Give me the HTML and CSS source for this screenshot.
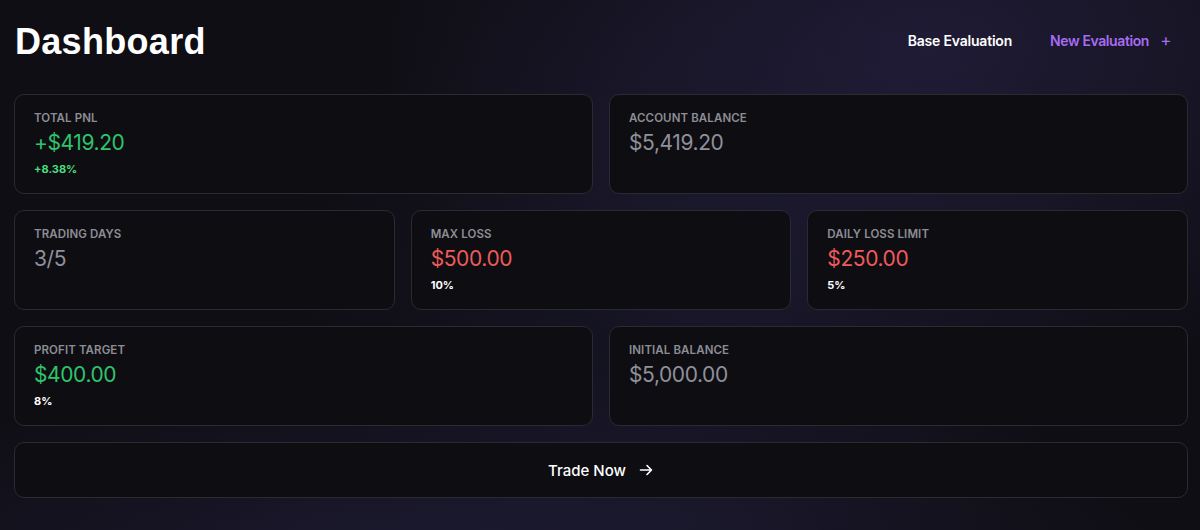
FILE: index.html
```html
<!DOCTYPE html>
<html>
<head>
<meta charset="utf-8">
<link rel="stylesheet" href="styles.css">
</head>
<body>
<div class="page">
  <header class="header">
    <h1 class="title">Dashboard</h1>
    <nav class="actions">
      <span class="base">Base Evaluation</span>
      <span class="new">New Evaluation <span class="plus">+</span></span>
    </nav>
  </header>
  <div class="row two">
    <div class="card">
      <div class="label">TOTAL PNL</div>
      <div class="value green">+$419.20</div>
      <div class="sub green-l">+8.38%</div>
    </div>
    <div class="card">
      <div class="label">ACCOUNT BALANCE</div>
      <div class="value gray">$5,419.20</div>
    </div>
  </div>
  <div class="row three">
    <div class="card">
      <div class="label">TRADING DAYS</div>
      <div class="value gray">3/5</div>
    </div>
    <div class="card">
      <div class="label">MAX LOSS</div>
      <div class="value red">$500.00</div>
      <div class="sub">10%</div>
    </div>
    <div class="card">
      <div class="label">DAILY LOSS LIMIT</div>
      <div class="value red">$250.00</div>
      <div class="sub">5%</div>
    </div>
  </div>
  <div class="row two">
    <div class="card">
      <div class="label">PROFIT TARGET</div>
      <div class="value green">$400.00</div>
      <div class="sub">8%</div>
    </div>
    <div class="card">
      <div class="label">INITIAL BALANCE</div>
      <div class="value gray">$5,000.00</div>
    </div>
  </div>
  <button class="trade">Trade Now
    <svg class="arrow" width="16" height="16" viewBox="0 0 16 16" fill="none" stroke="currentColor" stroke-width="1.6" stroke-linecap="round" stroke-linejoin="round"><path d="M2.5 8h11M9 3.5L13.5 8 9 12.5"/></svg>
  </button>
</div>
</body>
</html>
```
FILE: styles.css
```css
* { box-sizing: border-box; }
html, body { margin: 0; height: 100%; }
body {
  background-color: #0f0e14;
  background-image:
    radial-gradient(ellipse 560px 340px at 930px 50px, rgba(42, 36, 76, 0.6), rgba(42,36,76,0) 100%),
    radial-gradient(ellipse 700px 200px at 480px 560px, rgba(40, 36, 74, 0.55), rgba(40,36,74,0) 100%),
    radial-gradient(ellipse 420px 320px at 700px 290px, rgba(30, 28, 54, 0.55), rgba(30,28,54,0) 100%);
  font-family: Inter, "Liberation Sans", sans-serif;
  color: #fff;
  overflow: hidden;
}
.page {
  padding: 0 12px 0 14px;
  display: flex;
  flex-direction: column;
  gap: 16px;
}
.header {
  display: flex;
  align-items: center;
  justify-content: space-between;
  height: 78px;
  padding-top: 6px;
}
.title {
  margin: 0 0 0 1px;
  font-family: "Liberation Sans", Arial, sans-serif;
  font-weight: 700;
  font-size: 36px;
  letter-spacing: 0.3px;
  color: #fff;
}
.actions {
  display: flex;
  align-items: center;
  gap: 38px;
  font-size: 14px;
  font-weight: 600;
  padding-right: 17px;
  margin-top: -4px;
  letter-spacing: -0.2px;
}
.base { color: #fff; }
.new { color: #a66cf2; letter-spacing: -0.4px; }
.plus { margin-left: 8px; font-size: 17px; font-weight: 400; }
.row { display: grid; gap: 16px; }
.row.two { grid-template-columns: 1fr 1fr; }
.row.three { grid-template-columns: 1fr 1fr 1fr; }
.card {
  height: 100px;
  background: #0e0d12;
  border: 1px solid #2a2a31;
  border-radius: 10px;
  padding: 16px 19px;
}
.label {
  font-size: 11.5px;
  font-weight: 600;
  color: #8d8d95;
  letter-spacing: 0.1px;
  line-height: 14px;
}
.value {
  font-size: 21px;
  font-weight: 400;
  line-height: 26px;
  margin-top: 5px;
  letter-spacing: -0.4px;
}
.sub {
  font-size: 11px;
  font-weight: 700;
  color: #fff;
  margin-top: 7px;
  line-height: 13px;
}
.green { color: #2ec46c; }
.green-l { color: #4ade80; }
.gray { color: #8e909a; }
.red { color: #ef5a5a; }
.trade {
  height: 56px;
  background: #0e0d12;
  border: 1px solid #2a2a31;
  border-radius: 10px;
  color: #fff;
  font-family: Inter, "Liberation Sans", sans-serif;
  font-size: 15px;
  font-weight: 500;
  display: flex;
  align-items: center;
  justify-content: center;
  gap: 12px;
  padding: 0;
}
.arrow { display: block; }
```
